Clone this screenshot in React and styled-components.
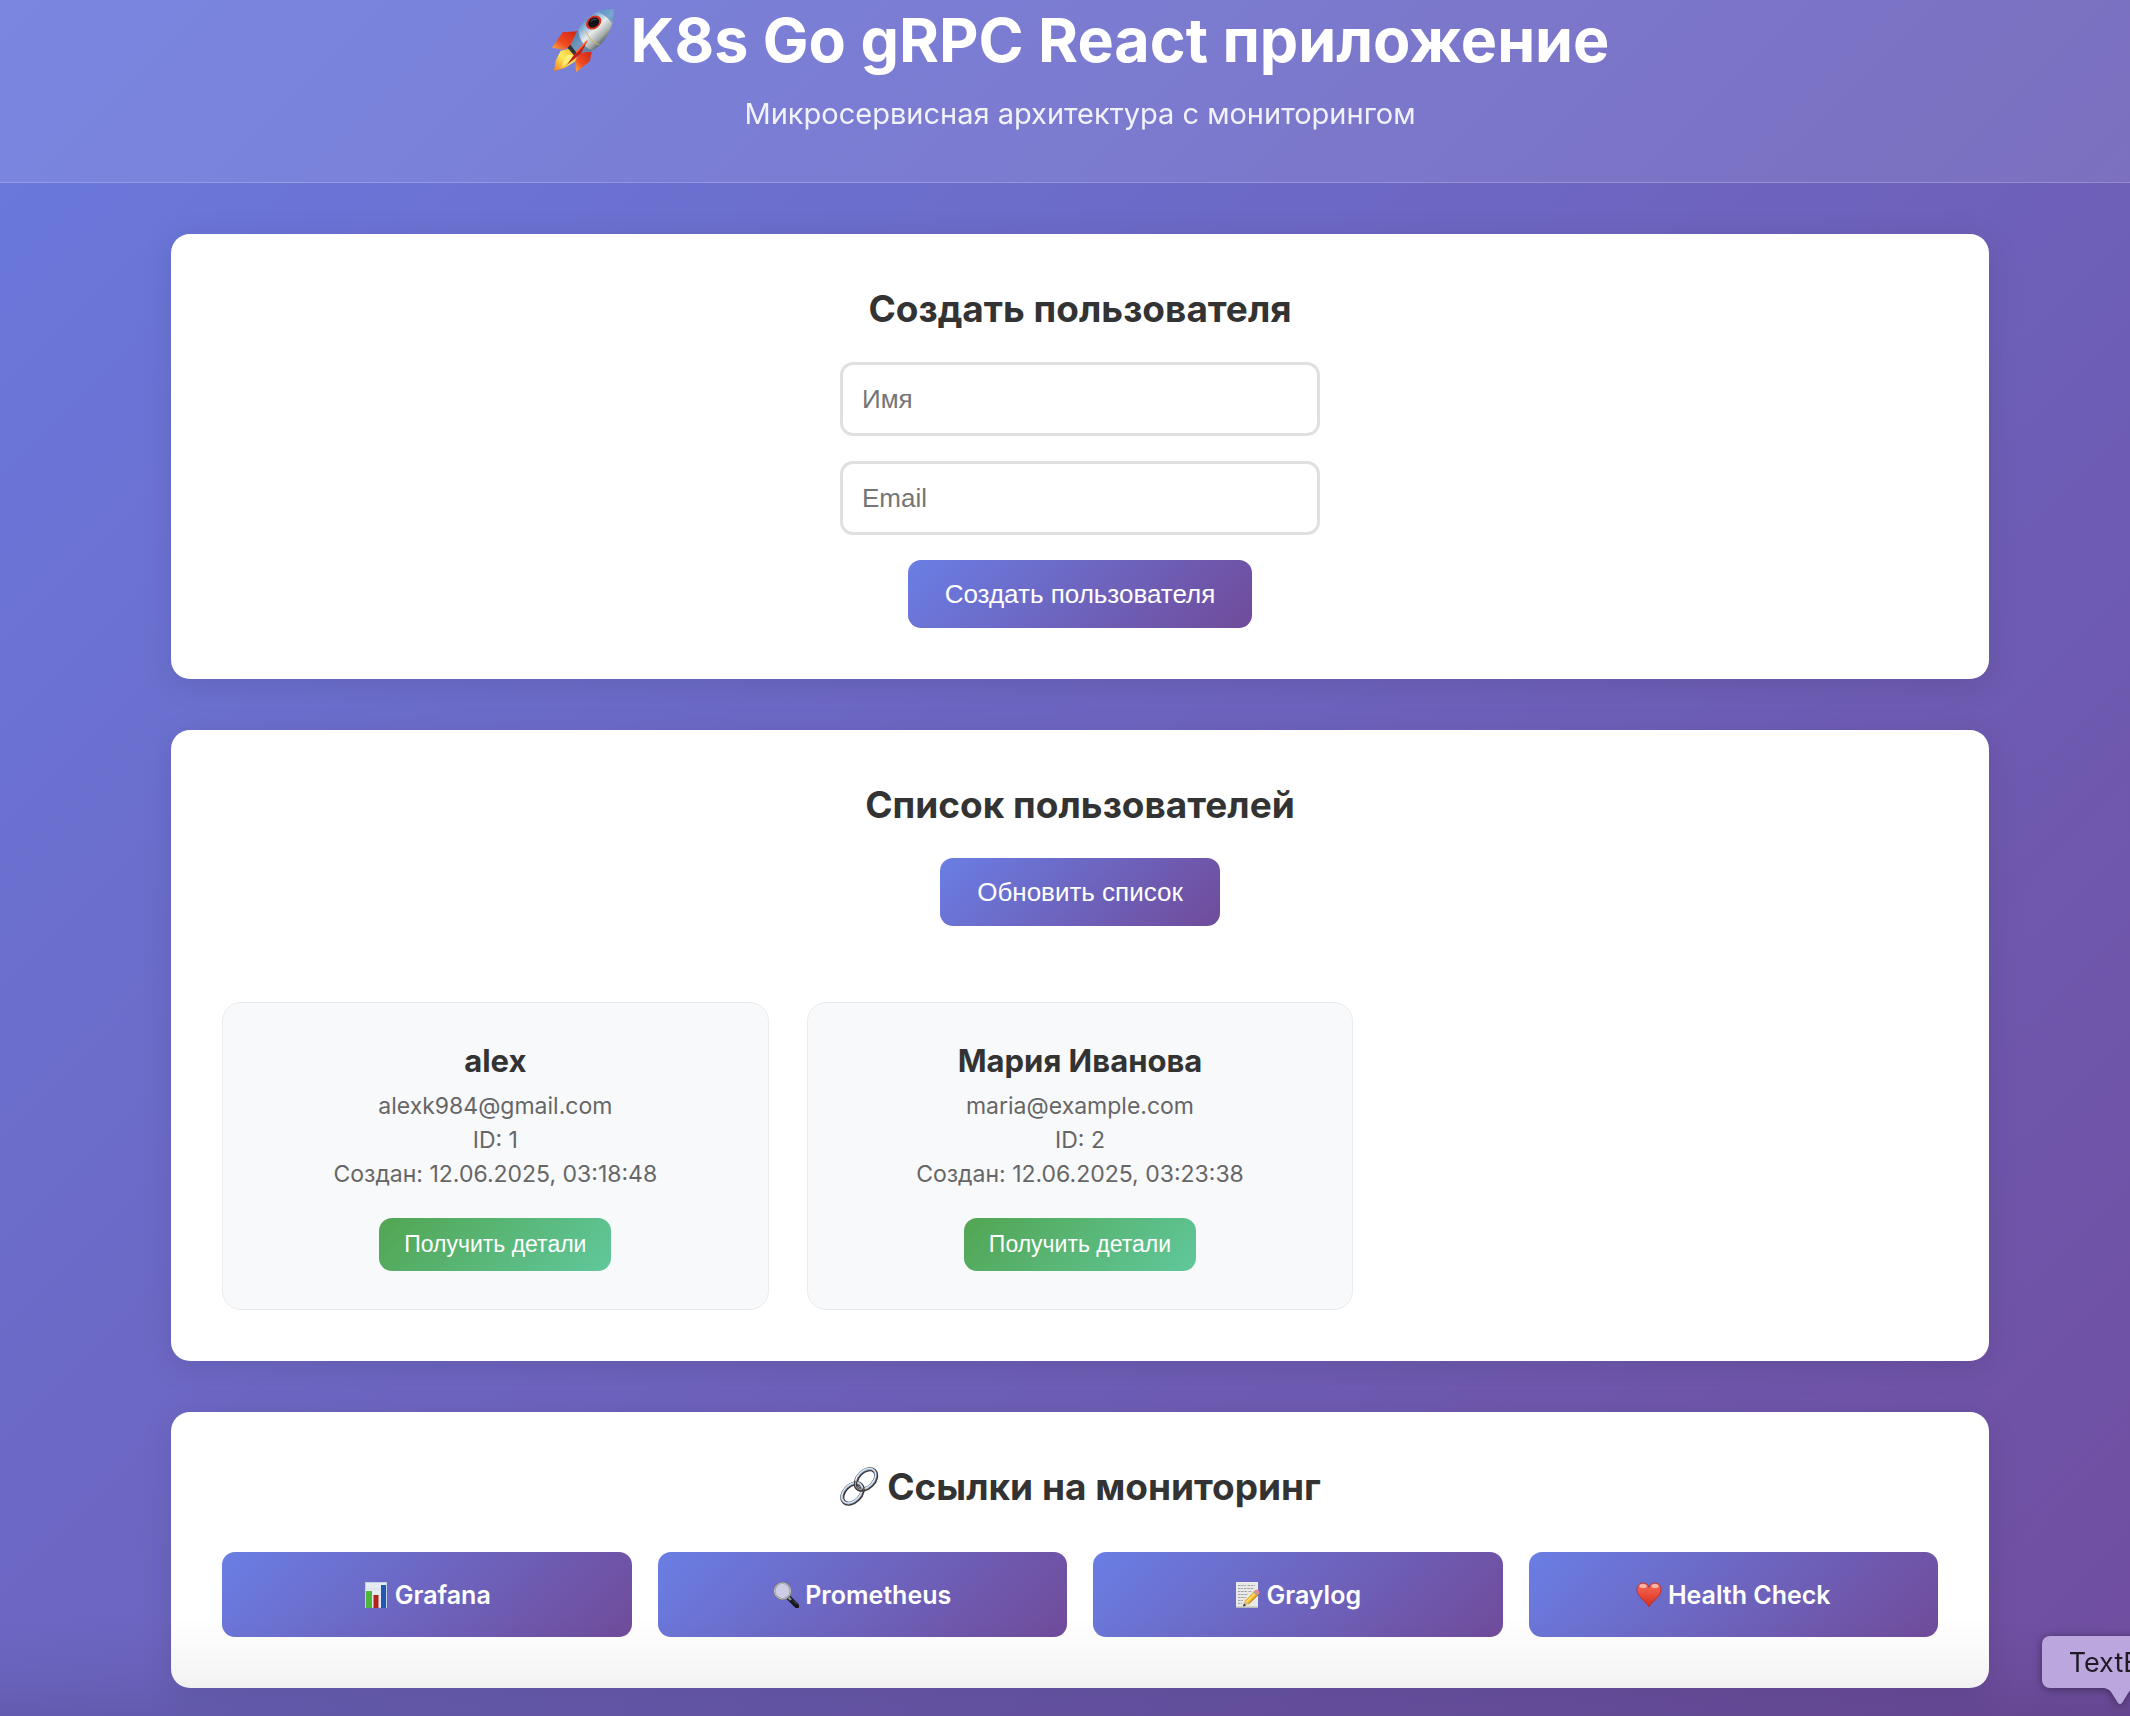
import React from "react";
import styled, { createGlobalStyle } from "styled-components";

const GlobalStyle = createGlobalStyle`
  *, *::before, *::after { box-sizing: border-box; }
  html { background: #704c9c; }
  body { margin: 0; overflow-x: hidden; font-family: Inter, "Liberation Sans", sans-serif; color: #333; }
  h1, h2, h3, p { margin: 0; }
`;

const violet = "linear-gradient(135deg, #6a7ee4 0%, #704b9a 100%)";

const Viewport = styled.div`
  position: relative;
  overflow: hidden;
`;

const Page = styled.div`
  width: calc(100% + 30px);
  min-height: 100vh;
  background: linear-gradient(135deg, #6a7ade 0%, #704d9f 100%);
`;

const Header = styled.header`
  display: flex;
  flex-direction: column;
  align-items: center;
  gap: 16px;
  padding: 0 51px 50px;
  text-align: center;
  color: #fff;
  background: rgba(255, 255, 255, 0.1);
  border-bottom: 1px solid rgba(255, 255, 255, 0.2);
`;

const AppTitle = styled.h1`
  display: flex;
  align-items: center;
  gap: 16px;
  font-size: 61px;
  line-height: 80px;
  font-weight: 700;
`;

const Subtitle = styled.p`
  font-size: 29px;
  line-height: 36px;
  opacity: 0.9;
`;

const Main = styled.main`
  display: flex;
  flex-direction: column;
  gap: 51px;
  max-width: 1920px;
  margin: 0 auto;
  padding: 51px 51px 27px;
`;

const Card = styled.section`
  padding: 51px;
  border-radius: 19px;
  background: #fff;
  box-shadow: 0 6px 32px rgba(0, 0, 0, 0.1);
`;

const CardTitle = styled.h2`
  display: flex;
  align-items: center;
  justify-content: center;
  gap: 8px;
  margin-bottom: 29px;
  font-size: 37px;
  line-height: 48px;
  font-weight: 700;
`;

const Form = styled.form`
  display: flex;
  flex-direction: column;
  align-items: center;
  gap: 25px;
`;

const Field = styled.input`
  width: 100%;
  max-width: 480px;
  height: 74px;
  padding: 0 19px;
  border: 3px solid #e0e0e0;
  border-radius: 13px;
  background: #fff;
  font: 26px "Liberation Sans", sans-serif;
  color: #333;
  &::placeholder { color: #757575; opacity: 1; }
`;

const Button = styled.button`
  height: 68px;
  padding: 0 37px;
  border: 0;
  border-radius: 13px;
  background: ${violet};
  color: #fff;
  font: 26px "Liberation Sans", sans-serif;
  cursor: pointer;
`;

const DetailsButton = styled(Button)`
  height: 53px;
  margin-top: 27px;
  padding: 0 25px;
  background: linear-gradient(135deg, #52a552 0%, #60c89c 100%);
  font-size: 23px;
`;

const Actions = styled.div`
  display: flex;
  justify-content: center;
  margin-bottom: 76px;
`;

const UserGrid = styled.div`
  display: grid;
  grid-template-columns: repeat(auto-fill, minmax(480px, 1fr));
  gap: 38px;
`;

const UserCard = styled.article`
  display: flex;
  flex-direction: column;
  align-items: center;
  padding: 38px;
  border: 1px solid #e9ecef;
  border-radius: 19px;
  background: #f8f9fb;
`;

const UserName = styled.h3`
  margin-bottom: 8px;
  font-size: 31px;
  line-height: 40px;
  font-weight: 700;
`;

const UserInfo = styled.p`
  font-size: 23px;
  line-height: 34px;
  color: #666;
`;

const LinkGrid = styled.nav`
  display: grid;
  grid-template-columns: repeat(auto-fit, minmax(320px, 1fr));
  gap: 26px;
  margin-top: 41px;
`;

const MonitorLink = styled.a`
  display: flex;
  align-items: center;
  justify-content: center;
  gap: 6px;
  height: 85px;
  border-radius: 13px;
  background: ${violet};
  color: #fff;
  font-size: 25px;
  font-weight: 600;
  text-decoration: none;
`;

const BottomShade = styled.div`
  position: absolute;
  inset: auto 0 0;
  height: 100px;
  pointer-events: none;
  background: linear-gradient(rgba(0, 0, 0, 0), rgba(0, 0, 0, 0.04) 60%, rgba(0, 0, 0, 0.1));
`;

const DockTooltip = styled.div`
  position: absolute;
  right: -68px;
  bottom: 28px;
  display: flex;
  align-items: center;
  justify-content: center;
  width: 156px;
  height: 52px;
  border-radius: 8px;
  background: #bba6de;
  color: #1f1b24;
  font-size: 27px;
  filter: drop-shadow(0 1px 4px rgba(0, 0, 0, 0.4));
`;

const TooltipTail = styled.svg`
  position: absolute;
  top: 100%;
  left: 50%;
  margin: -1px 0 0 -18px;
`;

const RocketIcon = () => (
  <svg width="64" height="64" viewBox="0 0 66 66" aria-hidden="true">
    <defs>
      <linearGradient id="rkBody" x1="0.2" y1="0.2" x2="0.75" y2="0.8">
        <stop offset="0" stopColor="#3f74ad" />
        <stop offset="0.3" stopColor="#8db4d8" />
        <stop offset="0.55" stopColor="#e6ebea" />
        <stop offset="0.8" stopColor="#a9aeac" />
        <stop offset="1" stopColor="#4a5358" />
      </linearGradient>
      <linearGradient id="rkFin" x1="1" y1="0" x2="0" y2="1">
        <stop offset="0" stopColor="#cf2413" />
        <stop offset="0.6" stopColor="#ee4a22" />
        <stop offset="1" stopColor="#ffae45" />
      </linearGradient>
      <linearGradient id="rkFlame" x1="1" y1="0" x2="0" y2="1">
        <stop offset="0" stopColor="#e8a92c" />
        <stop offset="0.5" stopColor="#ffec5c" />
        <stop offset="1" stopColor="#ef7b1f" />
      </linearGradient>
    </defs>
    <path d="M27 24 L12 25 L1 41 L13 43 L22 38Z" fill="url(#rkFin)" />
    <path d="M42 45 L40 55 L26 66 L25 54 L31 46Z" fill="url(#rkFin)" />
    <path d="M19 42 L10 44 L5 54 L3 65 L14 62 L25 55 L28 47Z" fill="url(#rkFlame)" />
    <path d="M17 48 L11 61 L24 49Z" fill="#fff27c" />
    <path d="M64 1 C50 0 35 9 28 22 L20 39 L27 47 L42 44 C57 36 66 18 64 1Z" fill="url(#rkBody)" />
    <path d="M64 1 C58 0 52 2 48 4 C54 6 60 11 63 16 C65 10 65 6 64 1Z" fill="#568fc4" opacity="0.75" />
    <path d="M28 22 L20 39 L27 47 L42 44 C36 42 29 34 28 22Z" fill="#376da5" opacity="0.65" />
    <path d="M36 24 C39 31 43 36 50 38" fill="none" stroke="#c9b663" strokeWidth="1" />
    <path d="M20 38 L27 47 L24 49 L17 41Z" fill="#2b3438" />
    <path d="M38 33 L26 45 L16 59 L31 47Z" fill="#c51f13" />
    <path d="M37 34 L26 46" stroke="#ff6c3b" strokeWidth="1.5" />
    <ellipse cx="44" cy="15" rx="8.5" ry="6.5" transform="rotate(-35 44 15)" fill="#d92e21" />
    <ellipse cx="44" cy="15" rx="6" ry="4.8" transform="rotate(-35 44 15)" fill="#101315" />
    <path d="M41 14 Q44 10 47 12" fill="none" stroke="#57656d" strokeWidth="1" />
  </svg>
);

const LinkIcon = () => (
  <svg width="40" height="40" viewBox="0 0 40 40" aria-hidden="true">
    <g fill="none">
      <ellipse cx="27" cy="12.5" rx="12" ry="8" transform="rotate(-45 27 12.5)" stroke="#3e3435" strokeWidth="4" />
      <ellipse cx="26.500" cy="12" rx="12" ry="8" transform="rotate(-45 26.500 12)" stroke="#8fa9c4" strokeWidth="2.4" />
      <ellipse cx="26.500" cy="11.7" rx="12" ry="8" transform="rotate(-45 26.500 11.7)" stroke="#edf3f8" strokeWidth="1" />
      <ellipse cx="13.5" cy="26.500" rx="12" ry="8" transform="rotate(-45 13.5 26.500)" stroke="#3e3435" strokeWidth="4" />
      <ellipse cx="13" cy="26" rx="12" ry="8" transform="rotate(-45 13 26)" stroke="#8fa9c4" strokeWidth="2.4" />
      <ellipse cx="13" cy="25.7" rx="12" ry="8" transform="rotate(-45 13 25.7)" stroke="#edf3f8" strokeWidth="1" />
      <path d="M17 14 C15 20 18 24 24 23" stroke="#443a3b" strokeWidth="3" />
      <path d="M17 14 C15 20 18 23 23 22.5" stroke="#a3a9ae" strokeWidth="1" />
    </g>
  </svg>
);

const ChartIcon = () => (
  <svg width="26" height="26" viewBox="0 0 26 26" aria-hidden="true">
    <rect x="2" width="22" height="26" fill="#c3d0dd" />
    <rect x="3" y="1" width="20" height="24" fill="#e4ebf3" />
    <path d="M3 7 H23 M3 13 H23 M3 19 H23" stroke="#cdd8e3" strokeWidth="0.6" />
    <rect x="3" y="9" width="6" height="17" fill="#4fb63a" />
    <rect x="10.5" y="13" width="5" height="13" fill="#b3231b" />
    <rect x="18" y="3" width="5" height="23" fill="#2257b4" />
  </svg>
);

const SearchIcon = () => (
  <svg width="26" height="26" viewBox="0 0 26 26" aria-hidden="true">
    <path d="M16 16 L24 24" stroke="#17181a" strokeWidth="4.6" strokeLinecap="round" />
    <path d="M15 15 L18 18" stroke="#8f9296" strokeWidth="2.4" />
    <path d="M20 18.5 L24 22.5" stroke="#55585c" strokeWidth="0.9" />
    <circle cx="9.5" cy="9" r="8.2" fill="#cfcde6" stroke="#77797f" strokeWidth="2" />
    <circle cx="9.5" cy="9" r="8" fill="none" stroke="#d9dade" strokeWidth="0.8" />
  </svg>
);

const MemoIcon = () => (
  <svg width="26" height="26" viewBox="0 0 26 26" aria-hidden="true">
    <rect x="2" width="22" height="26" fill="#e9e9e7" />
    <rect x="2" y="24.5" width="22" height="1.5" fill="#b9b9b7" />
    <path
      d="M4 3.5 H12 M13.500 3.500 H21 M4 6.500 H9 M10 6.500 H20 M4 9.500 H13 M14.500 9.500 H18 M4 12.500 H14 M4 15.500 H12 M4 18.500 H9 M4 21.500 H8"
      stroke="#a2a3a4"
      strokeWidth="1"
      strokeDasharray="2.500 0.700"
    />
    <path d="M9 24 L11 18.500 L21 8.500 L25 12 L14.500 22Z" fill="#f2b727" />
    <path d="M12.500 20 L22.500 10" stroke="#ffe072" strokeWidth="1.500" />
    <path d="M14.500 22 L25 12" stroke="#a86f16" strokeWidth="1" />
    <path d="M9 24.500 L11 18.500 L14.500 22Z" fill="#dcb98c" />
    <path d="M9 24.500 L10 21.500 L12 23.500Z" fill="#2c2926" />
    <path d="M20 9.500 L22 7.500 Q25 7.500 25.500 11 L24 13Z" fill="#e78791" />
    <path d="M19.500 9.800 L23.700 13.300" stroke="#9da3a6" strokeWidth="1.200" />
  </svg>
);

const HeartIcon = () => (
  <svg width="26" height="26" viewBox="0 0 26 26" aria-hidden="true">
    <defs>
      <linearGradient id="htFill" x1="0" y1="0" x2="0" y2="1">
        <stop offset="0" stopColor="#f4705c" />
        <stop offset="0.45" stopColor="#ea4f3b" />
        <stop offset="1" stopColor="#cf2f20" />
      </linearGradient>
    </defs>
    <path
      d="M13 25 C10 19 1 15 1 7.500 C1 3.500 4 1 7.200 1 C10 1 12 2.800 13 5.500 C14 2.800 16 1 18.800 1 C22 1 25 3.500 25 7.500 C25 15 16 19 13 25Z"
      fill="url(#htFill)"
      stroke="#b92a1c"
      strokeWidth="0.8"
    />
    <ellipse cx="7" cy="4" rx="3.600" ry="2" fill="#ffd2c8" opacity="0.75" />
    <ellipse cx="19" cy="4" rx="3.600" ry="2" fill="#ffd2c8" opacity="0.75" />
  </svg>
);

const users = [
  { id: 1, name: "alex", email: "alexk984@gmail.com", created: "12.06.2025, 03:18:48" },
  { id: 2, name: "Мария Иванова", email: "maria@example.com", created: "12.06.2025, 03:23:38" },
];

const links = [
  { label: "Grafana", Icon: ChartIcon },
  { label: "Prometheus", Icon: SearchIcon },
  { label: "Graylog", Icon: MemoIcon },
  { label: "Health Check", Icon: HeartIcon },
];

export default function App() {
  return (
    <Viewport>
      <GlobalStyle />
      <Page>
        <Header>
          <AppTitle>
            <RocketIcon />
            K8s Go gRPC React приложение
          </AppTitle>
          <Subtitle>Микросервисная архитектура с мониторингом</Subtitle>
        </Header>
        <Main>
          <Card>
            <CardTitle>Создать пользователя</CardTitle>
            <Form onSubmit={(event) => event.preventDefault()}>
              <Field type="text" name="name" placeholder="Имя" aria-label="Имя" />
              <Field type="email" name="email" placeholder="Email" aria-label="Email" />
              <Button type="submit">Создать пользователя</Button>
            </Form>
          </Card>
          <Card>
            <CardTitle>Список пользователей</CardTitle>
            <Actions>
              <Button type="button">Обновить список</Button>
            </Actions>
            <UserGrid>
              {users.map((user) => (
                <UserCard key={user.id}>
                  <UserName>{user.name}</UserName>
                  <UserInfo>{user.email}</UserInfo>
                  <UserInfo>ID: {user.id}</UserInfo>
                  <UserInfo>Создан: {user.created}</UserInfo>
                  <DetailsButton type="button">Получить детали</DetailsButton>
                </UserCard>
              ))}
            </UserGrid>
          </Card>
          <Card>
            <CardTitle>
              <LinkIcon />
              Ссылки на мониторинг
            </CardTitle>
            <LinkGrid>
              {links.map(({ label, Icon }) => (
                <MonitorLink key={label} href="#">
                  <Icon />
                  {label}
                </MonitorLink>
              ))}
            </LinkGrid>
          </Card>
        </Main>
      </Page>
      <BottomShade />
      <DockTooltip role="tooltip">
        TextEdit
        <TooltipTail width="36" height="18" viewBox="0 0 36 18" aria-hidden="true">
          <path d="M0 0 H36 V1 C30 1 28 3 25 8 L20 16 Q18 18 16 16 L11 8 C8 3 6 1 0 1Z" fill="#bba6de" />
        </TooltipTail>
      </DockTooltip>
    </Viewport>
  );
}
